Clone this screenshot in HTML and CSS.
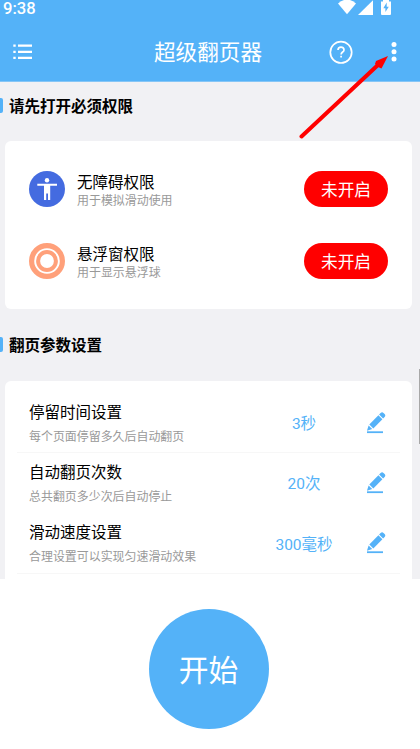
FILE: index.html
```
<!DOCTYPE html>
<html lang="zh-CN">
<head>
<meta charset="utf-8">
<title>超级翻页器</title>
<link rel="stylesheet" href="styles.css">
</head>
<body>
<svg class="defs" width="0" height="0" aria-hidden="true">
  <symbol id="pencil" viewBox="0 0 20 22">
    <path d="M2.6 13.4 6.2 17 1 18.8Z" fill="currentColor"/>
    <path d="M3.3 12.4 12.4 3.3 16.4 7.3 7.3 16.4Z" fill="currentColor"/>
    <path d="M13.1 2.6 14.6 1.1Q16.1 -.4 17.5 1L18.6 2.1Q20 3.5 18.6 5L17.1 6.6Z" fill="currentColor"/>
    <path d="M1 20.2H17" stroke="currentColor" stroke-width="1.8"/>
  </symbol>
</svg>
<div class="app">
  <header class="header">
    <div class="status">
      <span class="clock">9:38</span>
      <svg class="status-icons" width="54" height="16" viewBox="0 0 54 16" fill="#fff">
        <path d="M0 3.6Q9 -4.5 18 3.6L9 14.3Z"/>
        <path d="M20 15 35 .3V15Z"/>
        <path d="M43 1.5H45V0H51V1.5H53V14Q53 15 52 15H44Q43 15 43 14Z"/>
        <path d="M48.7 2.5 45.3 8.3H47.4V12L50.8 6.8H48.7Z" fill="#54b2f8"/>
      </svg>
    </div>
    <div class="toolbar">
      <svg class="menu" width="20" height="16" viewBox="0 0 20 16" stroke="#fff" stroke-width="2.3">
        <path d="M5 1.7H19M5 7.8H19M5 13.8H19"/>
        <path d="M.3 1.7H2.7M.3 7.8H2.7M.3 13.8H2.7"/>
      </svg>
      <h1 class="title">超级翻页器</h1>
      <svg class="help" width="24" height="24" viewBox="0 0 24 24" fill="none" stroke="#fff" stroke-width="1.7">
        <circle cx="12" cy="12.3" r="10.7"/>
        <path d="M9 10C9 6.1 15 6.1 15 9.9C15 12.1 12.1 12 12.1 14.5" />
        <path d="M12.1 15.8V17.6"/>
      </svg>
      <svg class="more" width="6" height="20" viewBox="0 0 6 20" fill="#fff">
        <circle cx="3" cy="2.6" r="2.5"/><circle cx="3" cy="9.8" r="2.5"/><circle cx="3" cy="17" r="2.5"/>
      </svg>
    </div>
  </header>
  <main class="content">
    <h2 class="section">请先打开必须权限</h2>
    <section class="card permissions">
      <div class="permission">
        <svg width="36" height="36" viewBox="0 0 36 36">
          <circle cx="18" cy="18" r="18" fill="#446be0"/>
          <circle cx="18" cy="9.3" r="2.2" fill="#fff"/>
          <path d="M8.3 12.7H28V14.8H21.2V29H19V22.6H17.2V29H15V14.8H8.3Z" fill="#fff"/>
        </svg>
        <div class="labels"><div class="name">无障碍权限</div><div class="note">用于模拟滑动使用</div></div>
        <button class="pill">未开启</button>
      </div>
      <div class="permission">
        <svg width="36" height="36" viewBox="0 0 36 36" fill="none" stroke="#ffa07a">
          <circle cx="18" cy="18" r="15.4" stroke-width="5.2"/>
          <circle cx="18" cy="18" r="8.9" stroke-width="4"/>
        </svg>
        <div class="labels"><div class="name">悬浮窗权限</div><div class="note">用于显示悬浮球</div></div>
        <button class="pill">未开启</button>
      </div>
    </section>
    <h2 class="section">翻页参数设置</h2>
    <section class="card settings">
      <div class="setting">
        <div class="labels"><div class="name">停留时间设置</div><div class="note">每个页面停留多久后自动翻页</div></div>
        <span class="value">3秒</span>
        <svg class="edit" width="20" height="22"><use href="#pencil"/></svg>
      </div>
      <div class="setting plain">
        <div class="labels"><div class="name">自动翻页次数</div><div class="note">总共翻页多少次后自动停止</div></div>
        <span class="value">20次</span>
        <svg class="edit" width="20" height="22"><use href="#pencil"/></svg>
      </div>
      <div class="setting">
        <div class="labels"><div class="name">滑动速度设置</div><div class="note">合理设置可以实现匀速滑动效果</div></div>
        <span class="value">300毫秒</span>
        <svg class="edit" width="20" height="22"><use href="#pencil"/></svg>
      </div>
    </section>
    <div class="scrollbar"></div>
  </main>
  <footer class="footer"><button class="start">开始</button></footer>
  <svg class="arrow" width="90" height="84" viewBox="0 0 90 84">
    <path d="M2.5 81.5 80 9" stroke="#f00" stroke-width="4" stroke-linecap="round"/>
    <path d="M89 1 82.5 13.5 79 12 76 9 77 6Z" fill="#f00"/>
  </svg>
</div>
</body>
</html>
```
FILE: styles.css
```
* { box-sizing: border-box; }
body {
  margin: 0;
  font-family: Roboto, "Noto Sans CJK SC", sans-serif;
  color: #000;
}
h1, h2 { margin: 0; }
svg { display: block; flex: none; }
button { border: 0; padding: 0; font: inherit; color: #fff; }
.defs { position: absolute; }
.app {
  position: relative;
  display: flex;
  flex-direction: column;
  width: 420px;
  height: 749px;
  overflow: hidden;
  background: #fff;
}
.header { height: 82px; background: #54b2f8; color: #fff; border-bottom: 1px solid #86c6f6; }
.status { display: flex; justify-content: space-between; align-items: flex-start; height: 22px; padding: 0 28px 0 3px; }
.clock { font-family: Roboto, sans-serif; font-size: 16.6px; line-height: 18px; font-weight: 500; }
.toolbar { display: grid; grid-template-columns: 13px 20px 1fr 24px 38px 6px 23px; align-items: center; height: 59px; }
.menu { grid-column: 2; }
.title { grid-column: 3; margin-left: 121px; padding-top: 3px; font-size: 21.6px; line-height: 32px; font-weight: 400; white-space: nowrap; }
.help { grid-column: 4; }
.more { grid-column: 6; }
.content { position: relative; height: 497px; background: #f1f1f4; overflow: hidden; }
.section {
  display: flex;
  align-items: center;
  height: 24px;
  margin-top: 12px;
  padding-top: 2px;
  font-size: 15.5px;
  line-height: 24px;
  font-weight: 700;
}
.section::before { content: ""; width: 3px; height: 15px; margin: 0 6px 4px 0; background: #54b2f8; border-radius: 0 2px 2px 0; }
.card { width: 407px; margin-left: 5px; background: #fff; border-radius: 6px; }
.permissions { height: 168px; margin-top: 23px; padding: 30px 24px 0; }
.permission { display: flex; align-items: center; height: 36px; margin-bottom: 36px; }
.labels { flex: 1; padding-top: 4px; white-space: nowrap; }
.permission .labels { margin-left: 12px; }
.name { font-size: 15.5px; line-height: 20px; }
.note { font-size: 11.95px; line-height: 17px; color: #999; }
.pill { width: 84px; height: 36px; padding-top: 3px; border-radius: 18px; background: #f00; font-size: 16.7px; line-height: 33px; }
.permissions + .section { margin-top: 24px; }
.settings { height: 230px; margin-top: 24px; padding: 12px 12px 0; }
.setting { display: flex; align-items: center; height: 60.3px; padding: 0 14px 0 12px; border-bottom: 1px solid #f7f7f7; }
.plain { border-color: transparent; }
.setting .name { line-height: 24px; }
.setting .note { line-height: 24px; }
.value { width: 90px; padding-bottom: 1px; text-align: center; font-size: 15.5px; color: #54b2f8; }
.edit { margin-left: 17px; color: #54b2f8; }
.scrollbar { position: absolute; right: 0; top: 287px; width: 1px; height: 75px; background: #a8a8a8; }
.footer { flex: 1; display: flex; justify-content: center; padding-top: 30px; background: #fff; }
.start { width: 120px; height: 120px; margin-right: 3px; padding-top: 3px; border-radius: 50%; background: #54b2f8; font-size: 29.8px; line-height: 117px; }
.arrow { position: absolute; left: 299px; top: 55px; }
```
